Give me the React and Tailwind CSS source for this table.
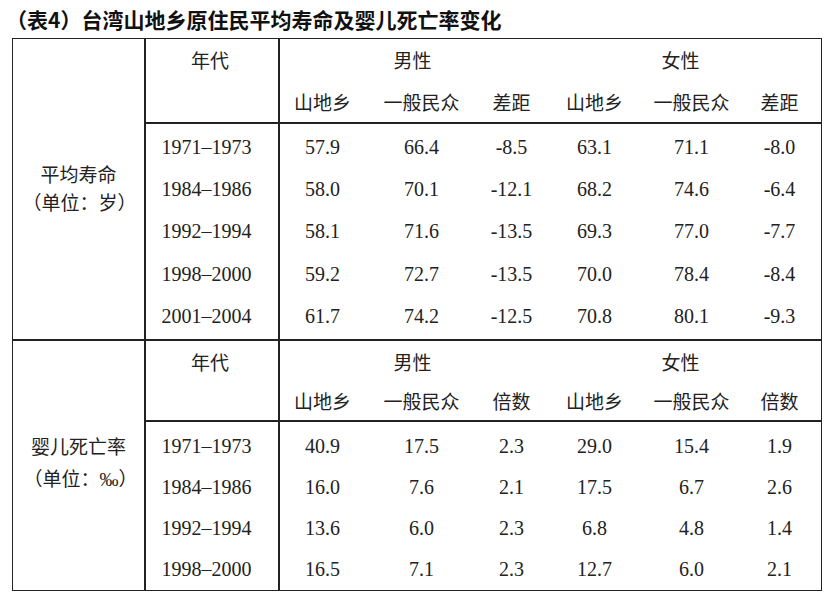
import React from "react";

const CJK = "font-['Noto_Sans_CJK_SC',sans-serif] text-[19px]";
const NUM = "font-['Liberation_Serif','Noto_Sans_CJK_SC',serif] text-[20px]";
const COLS = "grid grid-cols-[85px_113px_67px_99px_95px_81px]";

const sec1 = {
  label: ["平均寿命", "（单位：岁）"],
  unit: null,
  diff: "差距",
  rows: [
    ["1971–1973", "57.9", "66.4", "-8.5", "63.1", "71.1", "-8.0"],
    ["1984–1986", "58.0", "70.1", "-12.1", "68.2", "74.6", "-6.4"],
    ["1992–1994", "58.1", "71.6", "-13.5", "69.3", "77.0", "-7.7"],
    ["1998–2000", "59.2", "72.7", "-13.5", "70.0", "78.4", "-8.4"],
    ["2001–2004", "61.7", "74.2", "-12.5", "70.8", "80.1", "-9.3"],
  ],
};

const sec2 = {
  diff: "倍数",
  rows: [
    ["1971–1973", "40.9", "17.5", "2.3", "29.0", "15.4", "1.9"],
    ["1984–1986", "16.0", "7.6", "2.1", "17.5", "6.7", "2.6"],
    ["1992–1994", "13.6", "6.0", "2.3", "6.8", "4.8", "1.4"],
    ["1998–2000", "16.5", "7.1", "2.3", "12.7", "6.0", "2.1"],
  ],
};

function Header({ diff, row1, total }) {
  return (
    <div className={`flex border-b-2 border-[#222] ${total}`}>
      <div className={`w-[134px] shrink-0 border-r-2 border-[#222] flex flex-col`}>
        <div className={`${row1} flex items-center justify-center pr-[4px] ${CJK}`}>年代</div>
      </div>
      <div className="flex-1 flex flex-col">
        <div className={`${row1} grid grid-cols-[265px_275px] ${CJK}`}>
          <div className="flex items-center justify-center">男性</div>
          <div className="flex items-center justify-center pr-[4px]">女性</div>
        </div>
        <div className={`flex-1 ${COLS} ${CJK}`}>
          {["山地乡", "一般民众", diff, "山地乡", "一般民众", diff].map((t, i) => (
            <div key={i} className="flex items-center justify-center">
              {t}
            </div>
          ))}
        </div>
      </div>
    </div>
  );
}

function Body({ rows, rowH, pad }) {
  return (
    <div className={`flex ${pad}`}>
      <div className="w-[134px] shrink-0 border-r-2 border-[#222] -my-[3px] py-[3px] flex flex-col">
        {rows.map((r) => (
          <div key={r[0]} className={`${rowH} flex items-center justify-center pr-[11px] ${NUM}`}>
            {r[0]}
          </div>
        ))}
      </div>
      <div className="flex-1 flex flex-col">
        {rows.map((r) => (
          <div key={r[0]} className={`${rowH} ${COLS} ${NUM}`}>
            {r.slice(1).map((v, i) => (
              <div key={i} className="flex items-center justify-center">
                {v}
              </div>
            ))}
          </div>
        ))}
      </div>
    </div>
  );
}

export default function App() {
  return (
    <div className="w-[835px] h-[606px] bg-white text-[#222] overflow-hidden">
      <div className="h-[38px] pt-[4px] pl-[6px] leading-[30px] font-['Noto_Sans_CJK_SC',sans-serif] font-bold text-[21px] text-[#111]">
        （表4）台湾山地乡原住民平均寿命及婴儿死亡率变化
      </div>
      <div className="ml-[12px] w-[810px] border-[1.5px] border-[#222] flex flex-col">
        {/* Section 1 */}
        <div className="flex">
          <div className={`w-[133px] shrink-0 border-r-2 border-[#222] flex flex-col items-center justify-center leading-[28px] pb-[2px] ${CJK}`}>
            <div>平均寿命</div>
            <div className="pl-[2px]">（单位：岁）</div>
          </div>
          <div className="flex-1 flex flex-col">
            <Header diff={sec1.diff} row1="h-[43px]" total="h-[84.5px]" />
            <div className="flex">
              <div className="w-[134px] shrink-0 border-r-2 border-[#222] py-[2px] flex flex-col">
                {sec1.rows.map((r) => (
                  <div key={r[0]} className={`h-[42.4px] flex items-center justify-center pr-[11px] ${NUM}`}>
                    {r[0]}
                  </div>
                ))}
              </div>
              <div className="flex-1 py-[2px] flex flex-col">
                {sec1.rows.map((r) => (
                  <div key={r[0]} className={`h-[42.4px] ${COLS} ${NUM}`}>
                    {r.slice(1).map((v, i) => (
                      <div key={i} className="flex items-center justify-center">
                        {v}
                      </div>
                    ))}
                  </div>
                ))}
              </div>
            </div>
          </div>
        </div>
        {/* Section 2 */}
        <div className="flex border-t-2 border-[#222]">
          <div className={`w-[133px] shrink-0 border-r-2 border-[#222] flex flex-col items-center justify-center leading-[32px] pb-[6px] ${CJK}`}>
            <div>婴儿死亡率</div>
            <div className="pl-[4px]">
              （单位：<span className="font-['Liberation_Serif',serif] text-[19px]">‰</span>）
            </div>
          </div>
          <div className="flex-1 flex flex-col">
            <Header diff={sec2.diff} row1="h-[41px]" total="h-[81px]" />
            <div className="flex">
              <div className="w-[134px] shrink-0 border-r-2 border-[#222] pt-[3px] pb-[1px] flex flex-col">
                {sec2.rows.map((r) => (
                  <div key={r[0]} className={`h-[41px] flex items-center justify-center pr-[11px] ${NUM}`}>
                    {r[0]}
                  </div>
                ))}
              </div>
              <div className="flex-1 pt-[3px] pb-[1px] flex flex-col">
                {sec2.rows.map((r) => (
                  <div key={r[0]} className={`h-[41px] ${COLS} ${NUM}`}>
                    {r.slice(1).map((v, i) => (
                      <div key={i} className="flex items-center justify-center">
                        {v}
                      </div>
                    ))}
                  </div>
                ))}
              </div>
            </div>
          </div>
        </div>
      </div>
    </div>
  );
}
